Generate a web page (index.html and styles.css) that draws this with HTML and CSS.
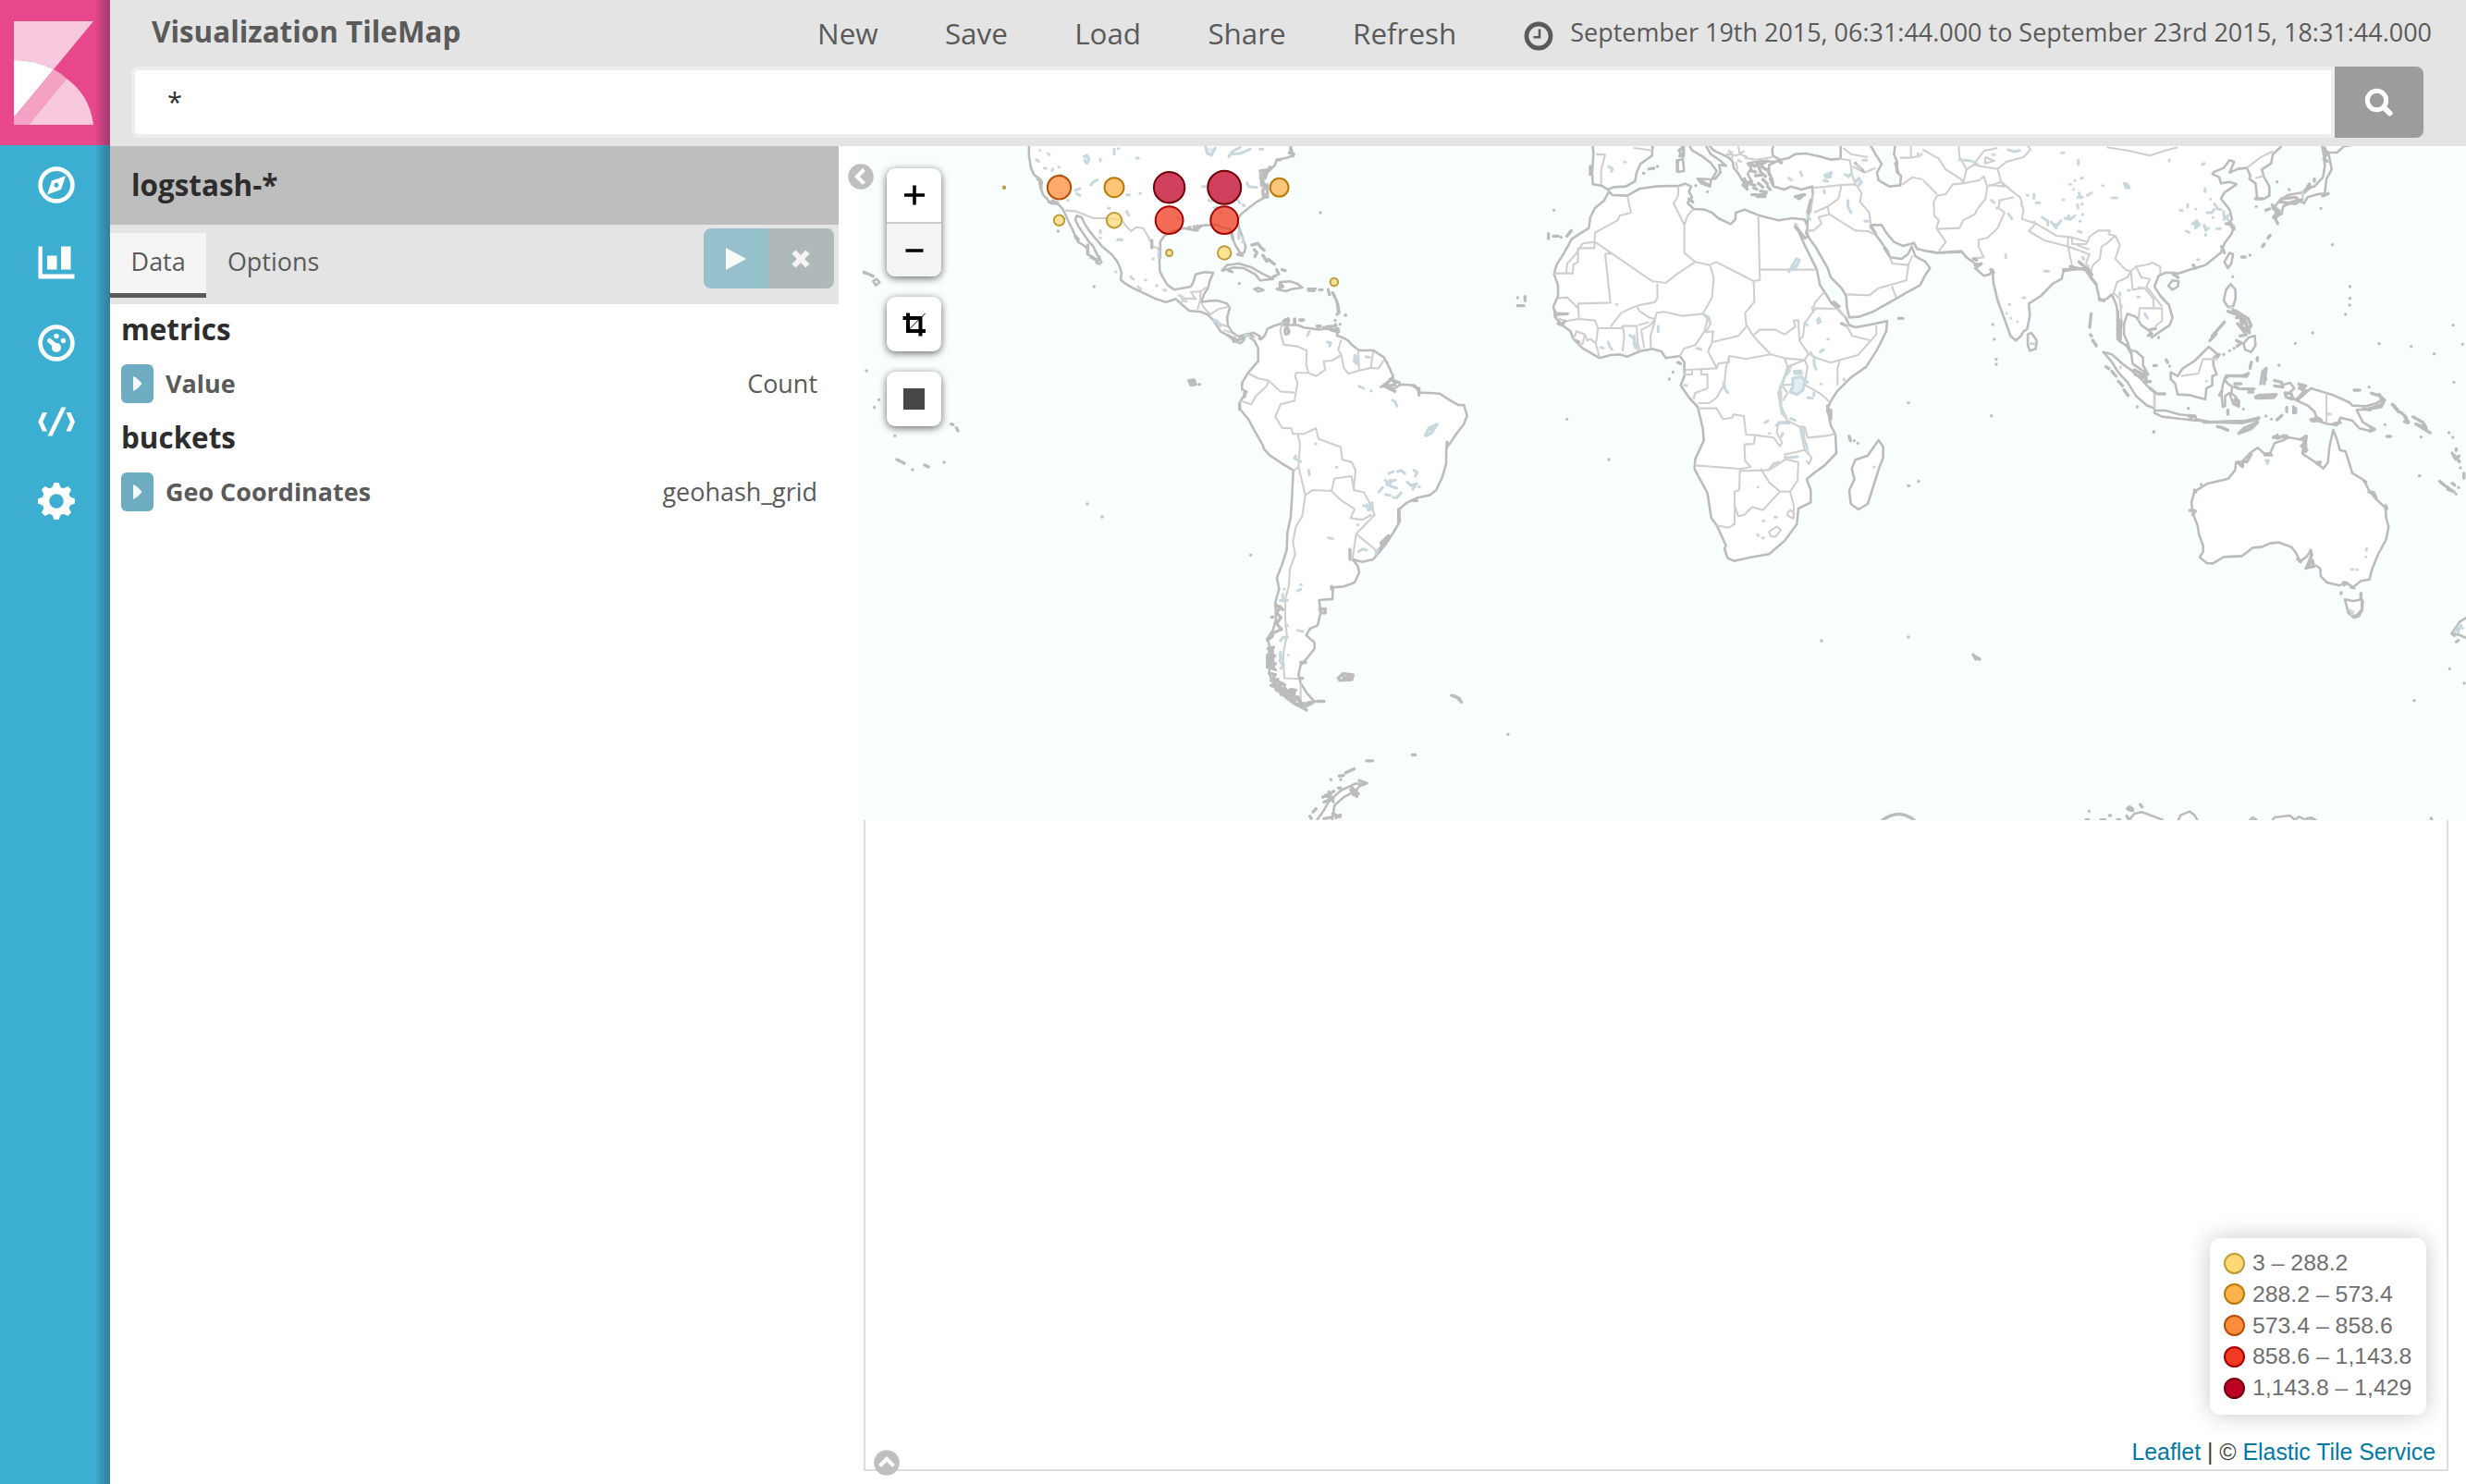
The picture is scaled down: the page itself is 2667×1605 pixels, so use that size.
FILE: index.html
```html
<!DOCTYPE html>
<html lang="en">
<head>
<meta charset="utf-8">
<title>Visualization TileMap</title>
<link rel="stylesheet" href="styles.css">
</head>
<body>
<div class="app">
  <nav class="nav">
    <div class="logo">
      <svg width="119" height="158" viewBox="0 0 119 158">
        <path fill="#f8c8dc" d="M15 23H101L58 75Q38 65 15 65Z"/>
        <path fill="#fff" d="M15 65Q38 65 58 75L15 127Z"/>
        <path fill="#f4a2c4" d="M58 75Q66 79 72 85L31 135H15V127Z"/>
        <path fill="#f8c8dc" d="M72 85Q97 103 101 135H31Z"/>
      </svg>
    </div>
    <a class="nav-item"><svg width="40" height="40" viewBox="0 0 40 40"><circle cx="20" cy="20" r="17.4" fill="none" stroke="#fff" stroke-width="4.6"/><path fill="#fff" fill-rule="evenodd" d="M30 10.300L25 25L10 30.500L15 15.500ZM20 17.600a2.600 2.600 0 1 0 .01 0Z"/></svg></a>
    <a class="nav-item"><svg width="40" height="40" viewBox="0 0 40 40"><path fill="#fff" d="M.5 1.500h4.300v30H39.500v5H.5ZM10 11.500h10.500v15H10ZM25 1.500h10.500v25H25Z"/></svg></a>
    <a class="nav-item"><svg width="40" height="40" viewBox="0 0 40 40"><circle cx="20" cy="20" r="17.400" fill="none" stroke="#fff" stroke-width="4.600"/><g fill="#fff"><circle cx="20" cy="12.500" r="2.700"/><circle cx="27.500" cy="17.500" r="2.700"/><circle cx="20" cy="25" r="5"/></g><path stroke="#fff" stroke-width="5" stroke-linecap="round" d="M12.500 17.300L19 23"/></svg></a>
    <a class="nav-item"><svg width="40" height="40" viewBox="0 0 40 40"><path fill="#fff" d="M25.500 4.500h5L15.500 35.500h-5ZM5 10h5L5.300 20.200L10 30.500H5L.3 20.200ZM30.500 10h5L40 20.200L35.500 30.500h-5L35 20.200Z"/></svg></a>
    <a class="nav-item"><svg width="40" height="40" viewBox="0 0 40 40"><path fill="#fff" fill-rule="evenodd" d="M17.500 0h5l2 5 3 1.300L32.500 4 36 7.500 33.700 12.500 35 15.500 40 17.500v5L35 24.500 33.700 27.500 36 32.500 32.500 36 27.500 33.700 24.500 35 22.500 40h-5L15.500 35 12.500 33.700 7.500 36 4 32.500 6.300 27.500 5 24.500 0 22.500v-5L5 15.500 6.300 12.500 4 7.500 7.500 4 12.500 6.300 15.500 5ZM20 12.300a7.700 7.700 0 1 0 .01 0Z"/></svg></a>
  </nav>

  <div class="main">
    <header class="header">
      <div class="topbar">
        <h1 class="title">Visualization TileMap</h1>
        <div class="menu"><a>New</a><a>Save</a><a>Load</a><a>Share</a><a>Refresh</a></div>
        <div class="timepicker">
          <svg width="32" height="32" viewBox="0 0 32 32"><circle cx="16" cy="16" r="13" fill="none" stroke="#5a5a5a" stroke-width="4.800"/><path fill="none" stroke="#5a5a5a" stroke-width="2.600" d="M17 8.500V17.200H10.500"/></svg>
          <span class="range">September 19th 2015, 06:31:44.000 to September 23rd 2015, 18:31:44.000</span>
        </div>
      </div>
      <div class="search">
        <div class="query">*</div>
        <button class="go"><svg width="32" height="32" viewBox="0 0 32 32"><circle cx="13.500" cy="13.500" r="10.200" fill="none" stroke="#fff" stroke-width="5"/><path stroke="#fff" stroke-width="6" stroke-linecap="round" d="M21.500 21.500L27.500 27.500"/></svg></button>
      </div>
    </header>

    <div class="content">
      <aside class="panel">
        <div class="index-pattern">logstash-*</div>
        <div class="tabs">
          <div class="tab tab-active">Data</div>
          <div class="tab">Options</div>
          <div class="apply">
            <span class="play"><svg width="24" height="26" viewBox="0 0 24 26"><path fill="#fafafa" d="M1 1L23 13L1 25Z"/></svg></span>
            <span class="discard"><svg width="20" height="20" viewBox="0 0 20 20"><path stroke="#f4f4f4" stroke-width="6" d="M2.500 2.500L17.500 17.500M17.500 2.500L2.500 17.500"/></svg></span>
          </div>
        </div>
        <h2 class="group">metrics</h2>
        <div class="agg"><span class="toggle"><svg width="10" height="18" viewBox="0 0 10 18"><path fill="#f4fafc" d="M0 1Q5 3 9.500 9Q5 15 0 17Z"/></svg></span><b class="agg-name">Value</b><span class="agg-type">Count</span></div>
        <h2 class="group">buckets</h2>
        <div class="agg"><span class="toggle"><svg width="10" height="18" viewBox="0 0 10 18"><path fill="#f4fafc" d="M0 1Q5 3 9.500 9Q5 15 0 17Z"/></svg></span><b class="agg-name">Geo Coordinates</b><span class="agg-type">geohash_grid</span></div>
      </aside>

      <section class="vis">
        <div class="frame"></div>
        <svg class="map" width="1734" height="729" viewBox="933 158 1734 729">
          <rect x="933" y="158" width="1734" height="729" fill="#f9ffff"/>
          <!-- North and Central America -->
          <g transform="translate(920 150) scale(.35714 .33333)">
            <path class="land" d="M540 15L540 55 546 95 556 118 570 128 576 134 572 145 576 160 582 180 598 200 608 210 628 212 642 228 650 245 660 270 672 295 680 315 690 325 688 335 704 345 716 355 718 375 735 385 752 407 760 400 748 380 740 362 735 350 722 335 706 310 690 285 680 262 685 250 700 256 708 275 720 295 738 320 762 350 790 375 805 395 815 415 820 435 818 458 832 470 850 482 885 500 925 520 955 530 985 520 1005 540 1025 558 1060 562 1080 570 1095 585 1108 605 1120 625 1145 640 1160 655 1180 664 1190 655 1195 640 1215 638 1230 658 1242 650 1238 640 1220 630 1195 635 1175 642 1155 628 1142 605 1140 580 1148 548 1140 535 1110 525 1080 527 1062 530 1070 505 1082 485 1088 460 1098 435 1070 433 1045 440 1038 465 1030 480 1000 486 980 490 960 475 948 455 936 430 935 395 938 360 937 335 950 315 975 300 1010 290 1040 297 1060 282 1085 280 1110 280 1125 288 1148 292 1155 320 1165 345 1180 372 1192 370 1196 350 1185 315 1175 285 1172 262 1182 245 1205 225 1230 205 1255 190 1262 170 1250 150 1240 125 1250 110 1255 130 1262 110 1285 85 1290 68 1320 62 1340 55 1332 40 1335 15"/>
            <path class="edge" d="M650 233L680 235 735 258 780 258 820 262 835 285 850 300 865 287 885 290 900 315 915 350 937 357M1000 535L1010 518 1045 520 1030 498 1060 495 1058 525M1060 495L1078 482M1058 525L1050 555M1062 535L1075 555 1090 570 1115 552 1148 545M1095 590L1130 605 1140 612M1162 650L1168 635M1130 620L1150 630"/>
            <path class="land" d="M1125 428L1140 410 1175 405 1215 418 1250 440 1280 455 1240 460 1225 440 1190 420 1160 418ZM1300 465L1330 463 1352 470 1368 483 1335 488 1318 495 1290 488 1310 480ZM1222 488L1235 484 1250 491 1235 496ZM1385 487L1408 487 1404 494 1386 493ZM68 462L78 455 88 466 76 476Z"/>
            <path class="isles" d="M1215 345l18-5 6 8M1222 360l8 10-6 12M1240 350l12 12M1248 378l12 20M1265 392l18 15M1290 425l6 14M1306 425l10 3M1145 428l10 4M1177 470h0M1422 240h0M737 480h0M1420 490h8M1446 490l4 16M1460 500l6 14M1470 522l6 20 2 24M1498 573h0M1482 602h0M1468 603h0M1280 448l8-4M1300 470l2 16M1025 785l15-2 4 14-14 2ZM1034 785v12M1056 797h0M38 433l16 6M60 442l8 4M48 753h0M86 847h0M72 872h0M304 926l6 2M320 938l5 10M134 964h0M628 300h0M566 130l8 8M578 140l-2 20M600 205h10M612 202l14 6M680 316l8 14M718 345v30M728 385l20 10M745 402l8-18M1040 285l2 12M1050 283v14M1060 284l-10 8M1020 291l8-4M1240 105l20-4M1242 115l12 8-8 12 8 14M1256 150l-8 18 2 20M1262 150v40M1244 130v22M1256 110l14-18M1290 70l12-2M1328 46l14 4M1332 30l8 26M1250 190l10-8M1152 300l6 25M1172 375l14 4M1145 640l24 14M1160 658l30-12M1318 590l6-6M1345 585v14M1360 588h12M1412 608h10M1440 610l30-2M1460 622l16-4 2 8M912 330v24M934 362l3 22"/>
            <path class="lakes" d="M573 38h0M598 48l4 4M562 68l8 6M706 58l10-4 6 14-6 12-8-10M756 66v6M798 34v16M810 32h2M586 96h6M612 98l-2 6M630 92h2M632 118h8M650 128l8 4M872 63h-6M727 150l8-10 12-6M680 168l14-6M684 178l10 6M657 200h2M636 176h4M836 182h8M876 178h2M836 235l6 14M780 225h4M756 298v8M808 328h14M755 322h2M802 432h2M848 448l8 8M892 458h2M870 480l8 8M926 476h2M948 490l6 2M915 390h2M933 365v20M995 508l10 6M1004 520l12 8M1102 588l10 6 8 14M1075 28L1080 48 1092 54 1104 30M1145 58L1155 42 1180 28M1150 50L1180 48 1210 34M1240 34h8M1200 144l6 12M1212 156l18 2M1170 196l8 12M1188 214l4 4M1100 225l15-3M1065 155h10M1085 200l8 3M990 255l4 8M1120 240v8M1175 300v25M1188 318v8M1186 335h4M1380 635l4-8M1445 658l8 6M1526 715h4M1540 806l12 2M1195 640h10M1378 622l8-6"/>
          </g>
          <!-- South America and the Antarctic peninsula -->
          <g transform="translate(1240 330) scale(.33333 .35714)">
            <path class="land" d="M362 100L372 104 385 90 392 72 415 62 440 55 450 43 462 44 460 54 442 60 490 60 510 68 560 74 590 70 620 78 618 92 640 100 655 108 668 122 690 137 735 137 770 158 780 175 788 190 800 215 790 228 760 248 785 242 800 255 825 240 870 243 885 265 920 266 950 268 985 288 1010 302 1030 303 1040 335 1030 360 1005 390 985 418 973 430 972 480 960 520 940 560 920 575 880 583 845 598 820 618 822 655 800 690 775 725 755 748 735 770 700 778 668 770 685 790 690 810 675 840 640 852 605 855 603 890 560 893 565 930 555 970 530 980 518 1000 545 1022 545 1040 520 1070 500 1090 493 1120 500 1145 520 1175 545 1200 520 1215 480 1205 440 1180 415 1155 400 1120 395 1070 400 1035 392 1010 410 985 420 950 418 900 430 860 423 825 440 785 455 740 457 690 468 640 472 580 476 500 440 480 400 455 380 435 378 425 350 380 330 345 303 315 302 295 325 262 310 255 310 235 330 205 362 170 362 130 350 108 335 98"/>
            <path class="edge" d="M440 52L434 80 445 120 490 125 520 138 518 180 525 205 550 215 580 195 575 170 600 168 632 152 622 135 632 105M632 152L640 190 655 208 690 198 686 140M690 198L728 190 735 140M728 190L752 192 772 165M525 205L485 205 482 218 490 235 480 290 435 300 418 338 440 372 470 373 475 390 510 390 550 373 558 405 630 430 635 468 665 475 678 500 672 560 705 567 725 600 740 635 680 693 668 770M680 693L740 738 748 755M332 208L362 222 395 228 390 245 355 275 340 300 305 290M395 228L435 262 480 265M490 390L498 420 493 490 478 502M493 490L515 575 540 560 600 563 610 525 665 518 672 555M600 563L630 590 675 618 662 645 700 650 730 635M515 575L505 640 485 670 475 715 482 755 465 800 462 850 450 890 450 950 455 1000 443 1060 447 1130 495 1132M500 1145V1200"/>
            <path class="isles" d="M138 228l10 14 10-4-14-6M148 230v10M172 240h0M338 757h0M480 44v8M500 46h6M556 66h4M575 68l34 8 12-4M600 76l20 4M612 46h0M646 30h0M620 4l4 16-6 8M446 48h14M450 72q-2 18 6 16t4-14-10-2M770 245l28-24 8 20-30 6 30 14M790 225l30 10M884 252v20M866 245l16 8M760 720l26-22-4 14-20 18M772 718l14-14M750 742l10-6M562 920h18v12h-14ZM622 1130l16-14 32 4-4 14-40 2M640 1128h20M636 1120l8 14 12-12M990 1182l18 6 14 14M1000 1184l16 8M1173 1300h0M862 1362h10M714 1380h20M625 1426l14-2M646 1416l28-12M598 1437h0M630 1437h0M302 300v16M318 265v12M975 416v14M818 618v40M865 592h12M420 908l12 10-10 14 14 14-14 18 16 18-26 10-4 12-16 10M432 912l10 10M406 945h4M394 1040l18-4-14 22 18 4-18 16 20 8-22 10 22 8M392 1060v36M400 1040v60M408 1040l4 60M398 1115l20 4-14 18 22-4-16 18 26 0-14 14 26-6 8 12-20 8 30-14 14 8-16 18 28-4 10 20-14 4M404 1152l30 10 40 20 30 24 30 2M420 1165l30 14 30 20M428 1140l20 10M455 1190l20 14 20 10 24 12M460 1170l30 20M470 1164l14 2M525 1204l22-4M556 1200h20M500 1082h16M496 1130h10M660 740v30M600 852v8"/>
            <path class="land" d="M545 1570L575 1530 590 1505 630 1470 680 1448 695 1452 680 1470 640 1490 610 1515 600 1570"/>
            <path class="isles" d="M690 1440l24 8-20 6M665 1460l22 20-14 4-10-16M668 1466l14 22M572 1490l36-18M576 1505l26-10M580 1485l24 12M592 1474l14 30M530 1548l4 6M540 1535l10-10M576 1555l24-4M604 1540l24 10M622 1462h8M615 1552l14-8"/>
            <path class="lakes" d="M218 46l14 6 8 10M320 92h10M522 92l6-12M586 112l12 2-4 10M676 152l-2 18 8 8 2-20M712 156l12 2M690 246l14 6M728 260h2M798 288l8 4 6 14M904 394l12-22 28-12-20 28-16 8M912 380l24-8M548 420h2M484 456l-4 8 12 6 8 4M526 500l2 14M616 491h2M786 510l14-6M814 504l12-4 12 10M868 500l10 6-6 12M774 530l14 14 8-12 12-2M780 540l16 10 16 4M790 530l-10 14M846 536l12 10 18-6-12 18M884 550h2M754 566l12-14M776 574l14 2M800 582l12 2 14-16M704 608l20 4 8-14 2 20-16 2M715 604l14 10M684 665h2M590 705l14 2M688 746l14-8 12 4M750 740l-6 14M500 847h2M490 865l10-4M446 860h2M442 876l2 16 14 2M434 894l12 2M452 970h6M490 985l16 3M434 1016l10-10 14 0M434 1050v24l10-10M432 1078l12 10-8 12M460 1060h0"/>
          </g>
          <!-- Africa, Europe and the Middle East -->
          <g transform="translate(1640 150) scale(.33333)">
            <path class="land" d="M246 10L250 45 246 110 248 148 275 152 298 165 315 157 355 155 385 138 390 110 402 82 440 55 443 10"/>
            <path class="land" d="M555 10L570 38 600 55 630 78 650 105 635 130 645 130 662 110 658 85 680 88 660 70 630 50 608 10"/>
            <path class="land" d="M615 10L640 38 665 50 690 62 702 75 705 95 718 110 730 130 748 160 752 140 765 140 750 115 762 95 750 80 775 75 800 72 835 75 858 70 832 55 830 35 838 10"/>
            <path class="fill" d="M1040 15H1442V372L1300 360 1040 62Z"/>
            <path class="land" d="M1052 15L1052 65 1020 68 985 58 940 48 905 50 885 62 858 68 820 85 820 110 830 130 835 155 870 165 890 155 925 165 960 155 962 180 955 215 945 262 944 280 942 300 948 320 970 350 990 385 1010 420 1020 450 1055 485 1070 510 1072 545 1080 580 1115 577 1160 560 1230 520 1265 500 1310 475 1325 445 1342 420 1325 398 1295 382 1283 350 1270 375 1250 390 1212 385 1205 365 1190 345 1165 310 1150 280 1185 280 1200 305 1225 335 1255 348 1290 338 1300 358 1360 370 1442 368"/>
            <path class="water" d="M1145 15L1165 50 1185 82 1170 110 1175 135 1210 155 1245 152 1248 120 1235 110 1235 75 1225 50 1230 15"/>
            <path class="land" d="M300 172L312 183 360 185 400 162 450 155 500 153 525 154 548 146 567 155 560 172 570 190 555 208 575 228 610 230 635 240 655 258 695 277 710 262 712 240 740 230 785 248 850 265 895 258 935 262 945 285 940 305 945 318 935 322 912 290 905 278 920 310 935 345 960 395 975 425 985 475 1000 497 1020 530 1045 555 1068 580 1080 605 1100 612 1150 603 1203 592 1200 625 1170 685 1135 740 1085 775 1040 820 1018 855 1010 880 1020 930 1035 960 1038 1020 1000 1060 965 1085 942 1105 955 1140 955 1180 915 1200 910 1250 870 1305 820 1348 760 1358 705 1370 685 1360 675 1330 680 1320 650 1255 632 1230 620 1150 578 1072 580 1040 608 980 605 940 588 870 560 840 533 800 545 770 545 725 530 705 485 712 470 690 440 682 400 690 360 707 335 700 305 702 270 712 215 680 185 650 175 625 150 605 128 582 120 545 135 510 135 475 122 440 130 410 155 370 180 325 235 290 240 255 255 225 285 200Z"/>
            <path class="land" d="M1175 978L1190 1000 1190 1035 1178 1065 1140 1185 1110 1203 1085 1185 1080 1140 1097 1105 1088 1070 1100 1042 1140 1028ZM588 130L632 132 628 155 600 145ZM522 72L540 65 544 105 525 108ZM530 38L540 28 543 45 532 55ZM905 188L935 180 920 195Z"/>
            <path class="edge" d="M258 50L288 52 275 100 275 150M380 30L440 38M360 185L372 240 335 250 328 265 255 305 253 355 200 355 200 400 185 408 183 437 122 437M255 335L215 340 190 378 165 405 162 435M255 335L440 462 485 468 520 440 580 400 628 410 648 400 770 462 772 530 742 565 745 600 765 635 782 655 825 700M580 400L545 370 545 280 510 210 525 185 525 154M545 280L555 250 575 228M785 248L790 458 770 462M790 425H970M288 373L305 532 200 535 203 585M288 373H312M457 470L458 515 450 530 390 542 340 565 305 610M135 517L165 515 200 550M130 565L172 568M130 582L160 592 203 585M203 585L255 590 265 615 258 665 240 650 230 655 222 635 195 625 185 650M222 635L215 665 200 672M265 615H340L345 608H390L395 690M258 665L270 710M345 608L350 640 345 690M390 542L400 560 430 580 450 585 435 605 405 620 415 680M395 605L430 595M450 585L455 565 480 562 540 575 605 568 635 515 640 450 628 410M450 590L435 640 436 680M605 568L620 585 610 625 580 670 545 680 530 705M615 575L630 600 615 628 638 625 635 660 720 640 750 605M635 660L622 690 650 745 550 750 545 765H570V750M650 745L655 730 690 725 690 705 745 715 825 700 870 712 880 740 860 800 850 825 860 890 885 920M600 750V765H620V810L580 825 575 845M690 705L680 745 675 795 650 840 625 858H590M590 875H650L670 910 700 905 705 895 738 900 745 960 775 962 770 990 740 992 742 1045 760 1065 725 1072 685 1068 580 1060M775 962L835 970 855 998 862 985 845 955 850 920 885 918 920 935 935 1010 870 1025 875 1040 820 1075 725 1078 723 1140 708 1145V1250L690 1262 650 1255M708 1190L720 1225 740 1220 765 1195 800 1205 855 1145 820 1115 792 1070M855 1145L888 1145 912 1110 915 1050 875 1040M888 1145L900 1190 900 1235M880 1212L890 1205 902 1218 895 1232 880 1222ZM820 1275L845 1258 858 1270 840 1292 825 1290ZM935 1010L958 1035 950 1055 940 1045M920 935H935L945 970 1000 965 1035 958M880 740L935 718 945 740 935 795 860 800M935 798L990 830 1018 855M870 712L935 718 948 698 918 655 930 640 935 600 960 565 972 550 1040 552 1068 580M918 655L915 590 900 590 905 610 870 635 840 620 790 620 765 640M948 698L975 712 1020 727 1050 718 1108 702 1168 635V605M1150 655L1090 640 1070 605M1050 718L1042 745V800M960 560L970 530 1000 497M962 160L1055 150 1100 148 1090 120 1082 70 1050 65M1055 150L1045 195 1010 220 965 240M1010 220L1015 245 1100 298 1140 300 1160 310M1015 245L980 255 990 275 965 298 944 298M962 180L955 240M1100 148L1120 175 1115 205 1145 240 1150 280M1072 505L1145 508 1175 485 1265 460 1272 410 1220 405 1212 385M1218 478L1232 515M1272 410L1285 380M1090 90L1130 110 1165 95M1060 30L1085 50 1140 60M1250 150L1285 125 1330 135 1365 165 1355 230 1370 265 1360 290 1395 330 1370 365M1365 165L1380 185 1420 165 1440 140M1280 20V62H1245M1280 62L1310 55 1330 35 1370 55 1390 90 1440 130M1365 290H1440M680 50L712 55 740 40M712 75L718 100M740 62L780 68 830 60M860 800L880 825 865 850M700 40V70M720 25L725 50 750 60"/>
            <path class="isles" d="M122 232h0M104 308v16M120 316h16M145 320h0M164 316l14-18M4 516h0M28 512v14M4 542h20M412 112h2M430 98l16-2M458 90h0M582 152h0M620 172h0M764 182h44M782 188h24M905 188l30-6M914 194l10-10M1024 534h6M1240 583h14M1272 857h0M1080 966l4 14M1096 980h0M1108 988h0M1272 1126h2M1305 1112h0M164 910h0M300 1041h0M496 780h0M508 757h0M524 726l8 4M758 80l16 10 10-12 14 4 16-10M762 104l14 4M776 120l20-2M782 78l10 30 16 14M795 90l15 10M752 145l22 6M740 130l8 18M770 160l10 4M792 170l20 4M815 100l8 20M824 130l8 20M800 132l14 14M785 145l14 12M815 155l8 10M850 72l10 6M735 150l14 14M240 90v26M130 570l34-2M135 600l16 6M126 560v18M150 600l8-8M195 656l8 4M1055 600l14 6M1010 866v20M1020 880v28M945 240l10-40M1030 530l16 14M1195 355l12 20M1150 285l14 20M1230 80l8 30M905 286l30 36M528 38l14-12v30h-12M522 70v36M600 138l28 14M1100 80l25 25M560 195l12 10"/>
            <path class="lakes" d="M300 90l12 8-4 8M350 76h4M884 128l8 6M922 108l4 12M1000 118l22-8-4 14-14 2M998 136l12 2M1066 116l12 8 10-12M1100 138l12-10 8 14-10 10M1124 70h12M1105 85l10 12M1076 200v22l10 18M1130 268h18M1303 48v10M1436 68h4M908 280h2M884 432l10-18 14-24 10 4-8 20-14 8 14-12M960 548h6M976 588l6-6 4 12-8 4M936 598l8 6M1010 650h2M986 692l10-8M955 694l4 8M966 708v24l6 16M900 755l22-2 4 8-22 2M896 778l30-6 10 14-6 30-20 14-22-8 10-20-2-20M938 785l6 6M988 796h2M1062 780l4 6M946 840l14 2M965 825v8M672 792l6 22 8 10M545 800h8M585 680l14 4M612 572l12 8 4 14M460 608v18M324 538h2M274 676l8 4M298 660l4 12 8 12M368 638l14 10 0 20 12 0 4 16M382 640l4 40M806 922l10-6M820 956h2M860 966l4-10M842 930l22-10 20 4M890 908l14 6M930 940l4 40 6 10 6 30M925 940l12 2M872 1036l40-4M822 1070l14-16 16-4M800 1240h4M838 1228h6M782 1284l4 4M798 1295h4M784 1130h0M1160 1065h2M998 168l2 8M945 250l8 12M720 70l8 4M690 40l4 6"/>
            <path class="lakes chain" d="M890 740l-14 20-14 36-6 10 2 26v32l4 14 14 28M886 752l-8 12"/>
          </g>
          <!-- Asia and the island arcs -->
          <g transform="translate(2080 150) scale(.37436 .33333)">
            <path class="fill" d="M-2 15H1045L0 368Z"/>
            <path class="land" d="M-1 362L40 370 110 365 125 385 150 405 165 410 150 420 175 445 192 440 200 425 203 470 215 525 238 595 252 640 268 655 282 640 290 625 300 618 308 575 305 535 340 510 375 470 400 455 405 430 430 425 465 420 480 445 500 475 510 525 530 520 545 505 558 540 565 590 565 655 585 670 600 690 605 730 650 765 635 735 635 710 615 690 595 685 592 665 580 635 580 600 590 568 615 578 630 605 655 625 660 645 685 625 712 605 720 580 710 540 685 510 668 480 680 445 700 435 725 435 735 438 770 425 815 410 860 370 870 340 890 310 898 285 880 275 892 262 885 230 860 195 870 175 905 148 885 140 860 145 855 125 835 115 840 108 868 95 885 70 898 75 885 110 910 98 935 95 945 120 942 130 960 145 965 195 985 195 1000 185 1000 155 985 125 978 100 1005 80 1010 50 1030 30 1040 15"/>
            <path class="land" d="M302 635L312 630 328 655 325 682 308 688 302 670ZM520 692L545 700 575 730 600 750 630 780 645 800 668 820 668 875 645 865 615 835 590 790 565 760 545 725ZM668 882L700 882 740 895 785 900 790 915 750 910 690 902 668 890ZM715 758L735 770 750 745 785 720 825 675 835 685 850 700 838 712 838 735 848 765 835 770 835 800 818 810 815 845 795 840 770 832 735 830 728 795 715 780ZM865 800L862 830 865 870 872 868 872 835 885 825 895 860 910 862 905 840 890 825 893 805 880 795 870 780 885 770 935 772 940 760 925 768 875 768ZM708 478L720 460 738 462 735 480 720 490ZM870 400L885 370 895 375 890 405 880 420ZM875 490L888 472 902 490 902 520 895 545 880 545 868 525ZM925 665L940 645 958 640 960 670 948 692 930 685ZM1150 10L1158 60 1160 90 1155 125 1130 155 1108 160 1095 175 1055 182 1030 200 1015 222 1020 245 1035 245 1040 220 1062 205 1085 200 1100 210 1110 190 1140 180 1160 178 1165 130 1180 100 1175 70 1170 45 1195 45 1215 25 1240 20"/>
            <path class="land" d="M1035 800L1060 792 1072 810 1060 822 1070 845 1110 865 1130 885 1140 915 1165 925 1195 930 1205 905 1240 915 1260 940 1290 948 1300 940 1270 920 1252 880 1285 878 1325 860 1330 845 1310 858 1280 868 1240 866 1230 855 1180 830 1120 810 1085 845 1070 845"/>
            <path class="edge" d="M-2 35L45 65 65 100 110 132 115 145 85 148 65 180 40 185 30 205 32 250 45 265 38 290 65 335 45 365M38 293L105 290 115 265 150 245 155 230 180 195 185 155 175 122 162 135 115 145M0 135L40 180M115 145L125 100 105 60 102 20M125 100L145 85 180 92 215 98 225 140 185 155M145 85L175 40 215 30M180 60L205 72 178 80ZM215 98L240 75 290 60 310 35 300 20M225 140L262 175 280 190 290 235 285 260 325 275 305 300 350 330 420 350M325 275L385 315 430 320 475 335 480 318 505 298 540 298 535 310 555 315 568 345 555 390 585 425 600 430 615 415 650 408 662 402 685 415 685 440M225 140L235 155 190 150M262 190L220 200 218 225 235 240 215 290 185 322 160 328 160 350 175 385 140 388M430 320V342H470L475 335M418 320V350L430 410 430 425M420 350L480 375 470 405M445 345L480 360M555 315L530 340 515 350 510 390 490 410 482 440M600 430L590 450 560 465 550 500 568 520 575 610M600 430L605 490 640 485 665 520 665 550 625 550 622 590M665 550H690L690 590 670 610M615 415L630 450 655 455 645 480 690 545M530 28L590 38 655 55 700 38 735 28M935 95L975 60 1010 40M960 128L985 120M745 770L795 762 808 715H850M1165 825V925M668 820V875M590 685L610 690"/>
            <path class="isles" d="M485 568l-4 44M483 636l3 4M490 654l10 18M201 603h0M205 651h0M211 716h0M211 732h0M197 899h0M666 951h0M702 718l4 8M666 736h8M712 738h0M680 645h0M528 740l8 6M545 755l12 16M564 788l12 14M580 815l12 18M618 870h0M640 788h16M655 810l18 16M680 828h18M766 875h0M612 765l28 12M610 750l34 20M640 760l6 30M590 668l8 22M562 560v90M570 590v60M980 350l5-8M996 322l6-8M920 384h10M944 378h0M894 448h0M1022 140h0M1057 165h0M960 195h20M962 220h0M1149 226h0M990 232l10-4M1182 344h0M1233 480h0M1233 518h0M1232 540h0M1220 570h0M1125 630h0M1075 664h0M1317 665h0M1410 674h0M1531 605h0M1558 667h0M1476 698h0M1533 790h0M1028 735h0M1010 225l20 20-14 12 8 18M1008 215l20 20-16 20M1035 195l40-5 15 12M1030 205l45 6 20-14M1045 215l25-10M1096 178l24-22M1110 155l6-8M1130 130v8M1155 30l14 16-12 18 10 10M1160 30v40M1170 178l-16 8M835 640l35-45M828 655l18-22M895 555l16 10-6 16 16-4-2 18 14 6M880 560l20 8M905 560l34 24 8 24M915 570l6 40 14 14M925 575l14 50 8-22M908 600l22 30M915 640l18-4M930 590l12 40M905 655l14 8-12 10M898 680h0M885 688h0M868 700h0M855 700l-5 8M965 710v10M948 725l-4 20M975 795l6-40 10-10-6 50M980 760l10 20M900 795h18M900 805l12 6M920 812h36M960 838l12-6 48-2-8 10-50 2M940 822h12M1015 785l20 5 4 16-24-4M1045 825l18 2 4 18-18-6ZM1085 796l20 6-12 12 14 4M1092 800l-6 10M1100 820l-20 26M1050 872v14M1070 870v20M1076 875v14M1022 912l14-14M1006 910h0M990 900h0M895 850l16 0 0 18-14-8 4-14M862 820l-6 12M880 880v14M925 877h0M790 912l40 8 50-2 50-2 40-10M810 920h50l60 2 46-12M765 898l20 2-14 6M850 934l14 4 16 8M912 956l14-16 40-20-20 22ZM1245 816h16M1288 806h0M1295 826l24 8 14 14-10 22-36 6M1318 830l8 24M1272 876l20 4M1355 862l18 24M1360 866l14 20M1380 888l14 14 6 20-10-4M1415 902l28 18 10 18-30-12M1430 930l34 24M1392 905l10 14M1334 928h0M1340 966h10M1438 968h0M1519 954h0M1530 969h0M1540 1006v6M1528 1020l10 20 10-10M1535 1028l14 20M1552 1068h0M1562 1086v16M1434 1094h0M1120 912l20-6 10 8-26 2M1185 925l20-4M1290 935l14 8-14 6M1012 968h34M1040 964h10M1105 965v14l-14 6M1105 990v14M1097 1015h8M1140 1050h8M905 1055l20-6M920 1058l10-14 18-16M146 390l8 4M150 410l18-4M195 425l8 8M405 425l60-4M425 415l40 10M450 400l20 18M475 420l12 22M484 450l16 22M508 520l14 6M655 620l16-4M780 410l6 10M862 350l8 20M890 285l8 8M875 276h16M722 440l14 10M650 638l10-6"/>
            <path class="lakes" d="M245 36l18 6 16-4M400 46h6M200 52h6M104 68l34 4M145 75l14 12M448 70v14M711 68v4M806 84l6-4M580 145l8 2 8 12-10 0ZM518 152h2M456 128h4M438 136h0M424 148h2M434 164h0M450 176l4 16M446 190h14M404 198h2M474 184l12-8M545 192h14M320 180v14M300 184h2M326 208h10M197 200l8 8M212 225h4M222 200h2M284 206v10M246 244l10 16M320 270h2M344 256l14 10M360 266v14M370 270l14 20M382 278v10l16-22M410 258l14 4 14-12M420 250v8M446 214v8M458 212h2M460 246h2M448 226h0M452 268h2M448 300l8 4M742 232l6 2M764 214v8M788 228h0M814 162v10M830 196h0M842 212l8 16 10 2M820 240h14l6-10M836 256h2M868 236v14l12 12M868 262l14-14M760 300l8 4M778 276l12-10 8 14-12 10M790 270l-4 14M812 280l4 18 8-8M816 310v4M848 292h10M792 392h4M238 376v10M350 430h12M288 516h6M248 538h2M241 566v2M253 583h0M272 593h0M310 665h12M460 384l4 8M472 410l6 4M568 500v8M572 540v8M592 492h4M622 484h8M620 514h4M640 568l8 14M570 740v4M818 787h0M986 1044l8 2-2 8M1168 893h8M1096 172v16M885 548h8"/>
          </g>
          <!-- Australia, New Zealand and the Antarctic coast -->
          <g transform="translate(2240 420) scale(.33333)">
            <path class="land" d="M850 135L862 165 872 200 890 205 900 235 912 275 950 298 968 335 990 360 1020 388 1022 420 1030 450 1022 490 995 540 975 590 968 620 940 625 915 645 890 630 870 640 830 630 810 610 808 585 795 575 780 580 760 585 780 545 778 525 765 545 742 562 730 535 715 515 675 500 645 503 620 514 590 517 555 544 495 547 460 568 440 567 417 548 428 530 428 510 415 475 410 445 395 405 390 370 400 335 440 310 510 293 532 265 535 240 555 238 580 210 605 193 625 210 645 212 660 178 690 168 700 158 755 168 750 212 790 238 818 260 833 240 838 190Z"/>
            <path class="land" d="M888 685L915 690 943 685 945 715 935 738 918 744 900 730ZM1285 742L1260 758 1235 795 1260 800 1285 812M185 1405L205 1380 230 1375 265 1388 300 1402M346 1405L355 1385 385 1373 400 1385 410 1402M650 1405L660 1392 710 1386 725 1400 740 1390 765 1402"/>
            <path class="isles" d="M657 160l12-8M668 162l22-8 10 8M745 165l18-10-4 22-12 10M755 190v14l10-4M795 242l10 4M540 240l16 14 0-16 14 0 14-24M385 396l18 2-8 12M400 330l4 6M422 312h0M628 216h22M950 300l6 4M966 336l16 2 8 18M1020 380l4 10M745 562l-10-8M765 580l18-22 4 20ZM776 526l4 14-8 22M884 630l12 2-10 6M908 645l10 2M876 662v4M940 665v18M945 690l-2 30-18 20M900 724l14 16 14-2M1250 822l6-4M1236 796l8 6M1228 910h0M1275 957h0M1113 1013h0M1130 284h0M268 141h0M1196 302l14 12 32 22-20-8M1236 308l8 6M1257 322h0M1249 343h0M182 1364q8-12 16 0t-16 0M224 1350l6 8M58 1372h0M124 1386h4M48 1400h8M96 1400h14M150 1399h8M180 1388l8 12M582 1400l8-6 10 6M765 1396l14-2 14 8M1168 1395l2 6"/>
            <path class="lakes" d="M632 234l8 0-4 10M958 520v6M956 547h0M910 587h4M926 588h2M904 720l10 6-4 8M1245 788l20-20-10 24M1258 770l12 8"/>
          </g>
          <path class="isles" d="M2036 887Q2054 874 2070 887M1970 693h0M2064 689h0M2136 710l5 3M2134 708l3 5M970 497l8 4M1000 503l4 2M987 508h0M1021 500h0M1176 545h0M1192 559h0"/>
          <!-- event counts per geohash cell -->
          <g stroke-width="2">
            <g fill="#fed976" fill-opacity=".75" stroke="#bd9c3a"><circle cx="1086" cy="202.700" r="1.200"/><circle cx="1145.500" cy="238.200" r="5.700"/><circle cx="1205" cy="238.200" r="8.200"/><circle cx="1264.600" cy="273.500" r="3.500"/><circle cx="1324.200" cy="273.500" r="7.200"/><circle cx="1442.900" cy="305" r="4.200"/></g>
            <g fill="#feb24c" fill-opacity=".75" stroke="#b97c08"><circle cx="1205" cy="202.700" r="10.500"/><circle cx="1383.600" cy="202.700" r="9.900"/></g>
            <g fill="#fd8d3c" fill-opacity=".75" stroke="#b64d06"><circle cx="1145.500" cy="202.700" r="12.700"/></g>
            <g fill="#f03b20" fill-opacity=".75" stroke="#a60000"><circle cx="1264.600" cy="238.200" r="14.900"/><circle cx="1324.200" cy="238.200" r="14.900"/></g>
            <g fill="#bd0026" fill-opacity=".75" stroke="#730008"><circle cx="1264.600" cy="202.700" r="16.700"/><circle cx="1324.200" cy="202.700" r="18"/></g>
          </g>
        </svg>

        <svg class="collapse collapse-side" width="28" height="28" viewBox="0 0 28 28"><circle cx="14" cy="14" r="13.800" fill="#bfbfbf"/><path d="M17.500 6.500L10 14L17.500 21.500" fill="none" stroke="#fff" stroke-width="4.200"/></svg>
        <svg class="collapse collapse-bottom" width="28" height="28" viewBox="0 0 28 28"><circle cx="14" cy="14" r="13.800" fill="#bfbfbf"/><path d="M6.500 17.500L14 10L21.500 17.500" fill="none" stroke="#fff" stroke-width="4.200"/></svg>

        <div class="controls">
          <div class="ctl">
            <a class="btn btn-on"><svg width="24" height="24" viewBox="0 0 24 24"><path stroke="#000" stroke-width="3.600" d="M12 1.500V22.500M1 12H23"/></svg></a>
            <a class="btn btn-off"><svg width="24" height="24" viewBox="0 0 24 24"><path stroke="#000" stroke-width="3.600" d="M2.500 12H21.500"/></svg></a>
          </div>
          <div class="ctl"><a class="btn"><svg width="26" height="26" viewBox="0 0 26 26"><path fill="none" stroke="#000" stroke-width="4" d="M6 .5V20H25M.5 6H19.500V25.500"/><path stroke="#000" d="M7 18.500L24.500 1"/></svg></a></div>
          <div class="ctl"><a class="btn"><i class="square"></i></a></div>
        </div>

        <div class="legend">
          <div class="bin"><i class="dot dot-1"></i>3 – 288.2</div>
          <div class="bin"><i class="dot dot-2"></i>288.2 – 573.4</div>
          <div class="bin"><i class="dot dot-3"></i>573.4 – 858.6</div>
          <div class="bin"><i class="dot dot-4"></i>858.6 – 1,143.8</div>
          <div class="bin"><i class="dot dot-5"></i>1,143.8 – 1,429</div>
        </div>
        <div class="attribution"><a>Leaflet</a> | © <a>Elastic Tile Service</a></div>
      </section>
    </div>
  </div>
</div>
</body>
</html>
```
FILE: styles.css
```css
* { box-sizing: border-box; }
body { margin: 0; background: #fff; font-family: "Open Sans", sans-serif; color: #5a5a5a; overflow: hidden; }
svg { display: block; }
.app { display: flex; width: 2667px; height: 1605px; }

.nav { position: relative; width: 119px; flex: none; background: #3caed2; }
.nav::after { content: ""; position: absolute; inset: 0 0 0 auto; width: 16px; background: linear-gradient(to right, rgba(35,40,60,0), rgba(35,40,60,.28) 70%, rgba(35,40,60,.34)); }
.logo { height: 157px; background: #e8478b; overflow: hidden; }
.nav-item { display: flex; height: 85.500px; padding-left: 41px; align-items: center; }

.main { flex: 1; display: flex; flex-direction: column; min-width: 0; }
.header { height: 158px; background: #e4e4e4; padding: 0 46px 0 23px; }
.topbar { display: flex; height: 72px; margin-right: -9px; white-space: nowrap; }
.title { margin: 0 0 0 22px; width: 720px; font-size: 31.400px; line-height: 67px; font-weight: 700; }
.menu { display: flex; gap: 72.300px; font-size: 31.400px; line-height: 71px; }
.timepicker { display: flex; align-items: flex-start; margin-left: auto; }
.timepicker svg { margin: 23px 18px 0 0; }
.range { font-size: 26.960px; line-height: 70px; }
.search { display: flex; height: 77px; }
.query { flex: 1; background: #fff; border: 4.500px solid #ebefef; border-right-width: 4px; border-radius: 8px 0 0 8px; padding-left: 35px; font-size: 29px; line-height: 68px; color: #2d2d2d; }
.go { width: 96px; border: 0; padding: 0; background: #9c9c9c; border-radius: 0 8px 8px 0; display: flex; align-items: center; justify-content: center; }

.content { flex: 1; display: flex; min-height: 0; }
.panel { width: 788px; flex: none; }
.index-pattern { height: 84.500px; padding-left: 23px; background: #bebebe; color: #2d2d2d; font-size: 31.400px; line-height: 83px; font-weight: 700; }
.tabs { display: flex; height: 86px; padding-top: 9.500px; background: #e4e4e4; font-size: 26.950px; }
.tab { height: 70px; padding: 0 22.600px; line-height: 61px; }
.tab-active { background: #f5f5f5; border-bottom: 5px solid #5a5a5a; }
.apply { display: flex; width: 141px; height: 65px; margin: -5px 5.500px 0 auto; border-radius: 8px; overflow: hidden; }
.apply span { flex: 1; display: flex; align-items: center; justify-content: center; }
.play { background: #97c0cd; }
.discard { background: #afb9ba; }
.group { margin: 0; height: 65px; padding-left: 12px; color: #2d2d2d; font-size: 31.400px; line-height: 53px; font-weight: 700; }
.agg { display: flex; align-items: center; height: 42px; margin: 0 23px 10px 12px; font-size: 26.950px; }
.toggle { display: flex; align-items: center; justify-content: center; width: 35px; height: 42px; margin-right: 13px; background: #6eadc1; border-radius: 6px; }
.agg-type { margin-left: auto; }

.vis { position: relative; flex: 1; padding-left: 26px; }
.map .land { fill: #fff; stroke: #bdbcbc; stroke-width: 2.600; stroke-linejoin: round; }
.map .fill { fill: #fff; }
.map .water { fill: #f9ffff; stroke: #bdbcbc; stroke-width: 2.600; }
.map .edge { fill: none; stroke: #d0cfcd; stroke-width: 2.100; stroke-linejoin: round; }
.map .isles { fill: none; stroke: #bdbcbc; stroke-width: 3.400; stroke-linecap: round; stroke-linejoin: round; }
.map .lakes { fill: #e3edf1; stroke: #c9d8de; stroke-width: 3; stroke-linecap: round; stroke-linejoin: round; }
.map .chain { fill: none; }
.map path { vector-effect: non-scaling-stroke; }
.frame { position: absolute; left: 27px; top: 0; width: 1714px; height: 1432.500px; border: 2.300px solid #ddd; }
.map { position: relative; }
.collapse { position: absolute; }
.collapse-side { left: 10px; top: 19px; }
.collapse-bottom { left: 37.500px; top: 1410px; }

.controls { position: absolute; left: 51.500px; top: 24px; display: flex; flex-direction: column; gap: 22px; }
.ctl { width: 59px; border-radius: 9px; background: #fff; overflow: hidden; box-shadow: 0 2px 9px rgba(0,0,0,.6); }
.btn { display: flex; align-items: center; justify-content: center; height: 59px; padding-left: 1px; }
.btn-on { height: 58px; }
.btn-off { background: #f4f4f4; border-top: 2px solid #ccc; }
.square { width: 23px; height: 23px; background: #464646; }

.legend { position: absolute; left: 1482.500px; top: 1180.700px; width: 234.500px; height: 191px; padding: 10.500px 0 0 15.500px; border-radius: 11px; background: #fff; box-shadow: 0 0 26px rgba(0,0,0,.22); font: 24.800px "Liberation Sans", Arial, sans-serif; color: #6f6f6f; }
.bin { display: flex; align-items: center; height: 33.800px; white-space: nowrap; }
.dot { width: 23px; height: 23px; margin-right: 8px; border-radius: 50%; border: 2px solid; }
.dot-1 { background: #fed976; border-color: #bd9c3a; }
.dot-2 { background: #feb24c; border-color: #b97c08; }
.dot-3 { background: #fd8d3c; border-color: #b64d06; }
.dot-4 { background: #f03b20; border-color: #a60000; }
.dot-5 { background: #bd0026; border-color: #730008; }
.attribution { position: absolute; right: 33px; top: 1397px; font: 24.850px/32px "Liberation Sans", Arial, sans-serif; color: #444; white-space: nowrap; }
.attribution a { color: #0078a8; }
```
